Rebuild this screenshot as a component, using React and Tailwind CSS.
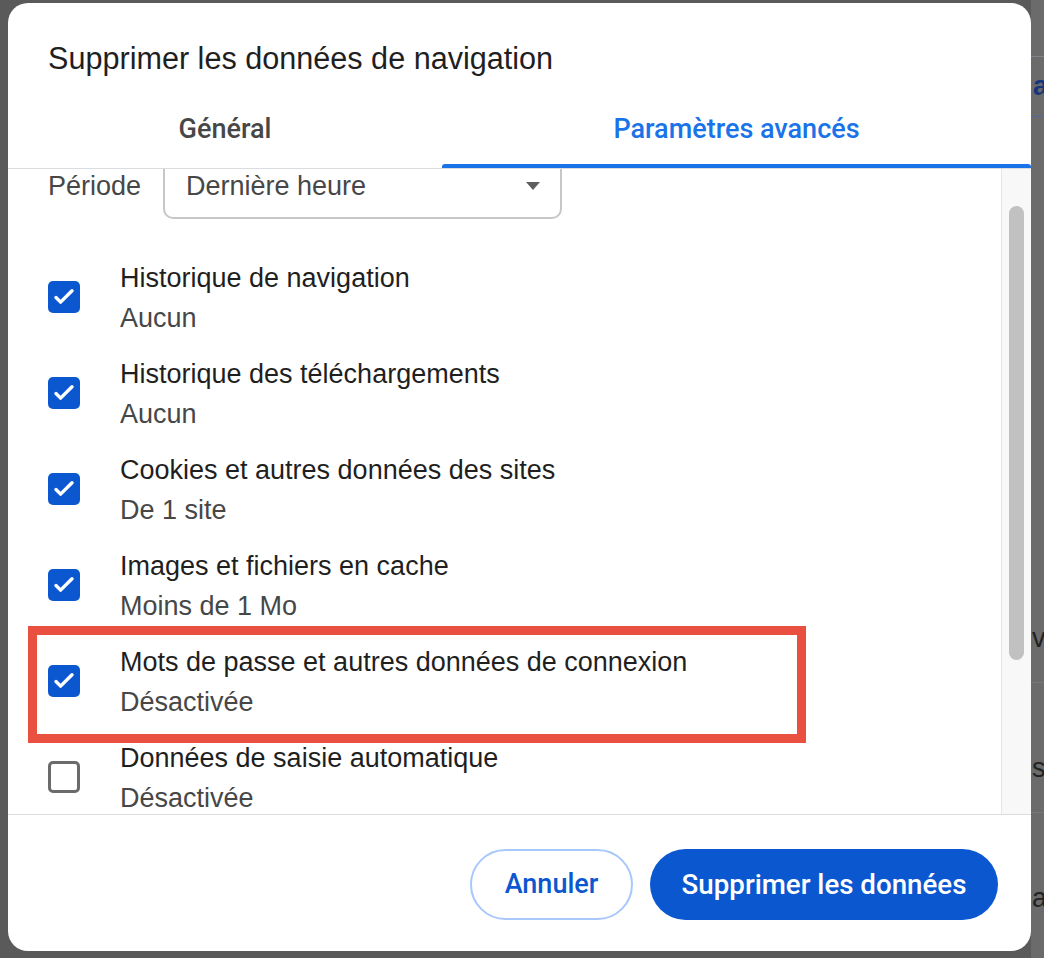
import React from 'react'

const ROWS = [
    { title: 'Historique de navigation', sub: 'Aucun', checked: true },
    { title: 'Historique des téléchargements', sub: 'Aucun', checked: true },
    { title: 'Cookies et autres données des sites', sub: 'De 1 site', checked: true },
    { title: 'Images et fichiers en cache', sub: 'Moins de 1 Mo', checked: true },
    { title: 'Mots de passe et autres données de connexion', sub: 'Désactivée', checked: true, marked: true },
    { title: 'Données de saisie automatique', sub: 'Désactivée', checked: false },
]

function Checkbox({ checked }) {
    if (!checked) {
        return <span className="w-[32px] h-[32px] shrink-0 rounded-[5px] border-[3px] border-[#6b6b6b] bg-white" />
    }
    return (
        <span className="w-[32px] h-[32px] shrink-0 rounded-[5px] bg-[#0b57d0] flex items-center justify-center">
            <svg width="32" height="32" viewBox="0 0 32 32" fill="none">
                <path d="M8 16.5l4.6 4.6L24 9.8" stroke="white" strokeWidth="3.4" strokeLinecap="round" strokeLinejoin="round" />
            </svg>
        </span>
    )
}

function Row({ row }) {
    return (
        <div className="relative h-[96px] flex items-center">
            <Checkbox checked={row.checked} />
            <div className="ml-[40px] pt-[2px] flex flex-col text-[27px] leading-[40px]">
                <span className="text-[#1f1f1f]">{row.title}</span>
                <span className="text-[#474747]">{row.sub}</span>
            </div>
            {/* annotation frame */}
            {row.marked && (
                <div className="absolute left-[-20px] top-[-7px] w-[778px] h-[117px] border-[9px] border-[#e9503f]" />
            )}
        </div>
    )
}

export default function App() {
    return (
        <div
            className="w-[1044px] h-[958px] bg-[#5a5a5a] flex overflow-hidden"
            style={{ fontFamily: '"Liberation Sans", Arial, sans-serif' }}
        >
            {/* dialog */}
            <div className="ml-[8px] mt-[3px] w-[1023px] h-[948px] bg-white rounded-[20px] flex flex-col overflow-hidden shrink-0">
                <div className="h-[97px] pl-[40px] pt-[35px] text-[30.6px] leading-[40px] text-[#1f1f1f]">
                    Supprimer les données de navigation
                </div>

                {/* tabs */}
                <div
                    className="h-[69px] flex border-b border-[#dadce0] text-[27px]"
                    style={{ fontFamily: 'Roboto, "Liberation Sans", sans-serif' }}
                >
                    <div className="w-[434px] flex items-center justify-center pb-[9px] font-medium text-[#474747]">Général</div>
                    <div className="relative flex-1 flex items-center justify-center pb-[9px] font-medium text-[#1a73e8]">
                        Paramètres avancés
                        <span className="absolute left-0 right-0 bottom-0 h-[4px] rounded-t-[3px] bg-[#1a73e8]" />
                    </div>
                </div>

                {/* scroll area */}
                <div className="flex-1 flex min-h-0">
                    <div className="flex-1 overflow-hidden">
                        <div className="-mt-[16px] pl-[40px]">
                            <div className="flex items-center h-[66px]">
                                <span className="w-[115px] text-[27px] text-[#474747]">Période</span>
                                <div className="w-[399px] h-[66px] border-2 border-[#c7c7c7] rounded-[10px] flex items-center justify-between pl-[21px] pr-[20px]">
                                    <span className="text-[27px] text-[#474747]">Dernière heure</span>
                                    <svg width="14" height="8" viewBox="0 0 14 8">
                                        <polygon points="0,0 14,0 7,8" fill="#5f5f5f" />
                                    </svg>
                                </div>
                            </div>
                            <div className="mt-[30px]">
                                {ROWS.map((row) => (
                                    <Row key={row.title} row={row} />
                                ))}
                            </div>
                        </div>
                    </div>
                    {/* scrollbar */}
                    <div className="w-[30px] shrink-0 border-l border-[#e6e6e6] bg-[#f8f8f8] pt-[37px] pl-[7px]">
                        <div className="w-[15px] h-[454px] rounded-full bg-[#c1c1c1]" />
                    </div>
                </div>

                {/* footer */}
                <div
                    className="h-[137px] border-t border-[#dadce0] flex justify-end items-start pt-[34px] pr-[33px] gap-[17px] font-medium"
                    style={{ fontFamily: 'Roboto, "Liberation Sans", sans-serif' }}
                >
                    <button className="w-[163px] h-[71px] rounded-full border-2 border-[#a8c7fa] text-[27px] text-[#0b57d0] bg-white">
                        Annuler
                    </button>
                    <button className="w-[348px] h-[71px] rounded-full bg-[#0b57d0] text-[27.7px] text-white">
                        Supprimer les données
                    </button>
                </div>
            </div>

            {/* page behind the overlay */}
            <div className="flex-1 bg-[#6b6b6b] flex flex-col text-[27px] leading-none">
                <div className="h-[57px] border-b border-[#80848c]" />
                <div className="h-[60px] border-b border-[#56669a] flex items-center pl-[2px] font-bold text-[#16357a]">a</div>
                <div className="h-[566px] border-b border-[#777777] flex items-end pb-[30px] pl-[1px] text-[#222222]">v</div>
                <div className="h-[130px] border-b border-[#777777] flex items-end pb-[30px] pl-[1px] text-[#222222]">s</div>
                <div className="flex-1 pt-[72px] pl-[1px] text-[#222222]">ar</div>
            </div>
        </div>
    )
}
